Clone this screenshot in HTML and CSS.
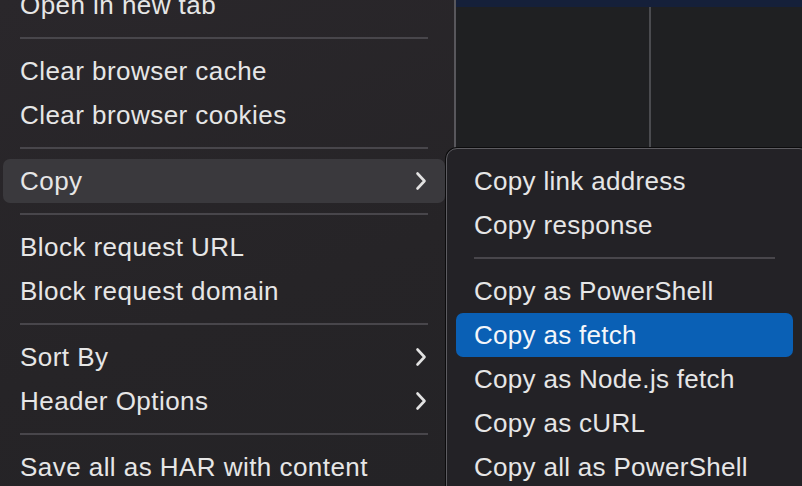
FILE: index.html
```html
<!DOCTYPE html>
<html lang="en">
<head>
  <meta charset="UTF-8">
  <title>Network context menu</title>
  <link rel="stylesheet" href="styles.css">
</head>
<body>
  <div class="screen">
    <!-- Main context menu -->
    <div class="menu">
      <div class="menu-list">
        <div class="item item-top">Open in new tab</div>
        <div class="sep"></div>
        <div class="item">Clear browser cache</div>
        <div class="item">Clear browser cookies</div>
        <div class="sep"></div>
        <div class="item item-open">Copy
          <svg class="chevron" viewBox="0 0 12 20"><polyline points="2.5,2.5 9.5,10 2.5,17.5"/></svg>
        </div>
        <div class="sep"></div>
        <div class="item">Block request URL</div>
        <div class="item">Block request domain</div>
        <div class="sep"></div>
        <div class="item">Sort By
          <svg class="chevron" viewBox="0 0 12 20"><polyline points="2.5,2.5 9.5,10 2.5,17.5"/></svg>
        </div>
        <div class="item">Header Options
          <svg class="chevron" viewBox="0 0 12 20"><polyline points="2.5,2.5 9.5,10 2.5,17.5"/></svg>
        </div>
        <div class="sep"></div>
        <div class="item">Save all as HAR with content</div>
      </div>
    </div>

    <!-- Network panel behind the menu -->
    <div class="pane">
      <div class="pane-band"></div>
      <div class="pane-cols">
        <div class="pane-col"></div>
        <div class="pane-col"></div>
      </div>
    </div>

    <!-- Copy submenu -->
    <div class="submenu">
      <div class="item">Copy link address</div>
      <div class="item">Copy response</div>
      <div class="sep"></div>
      <div class="item">Copy as PowerShell</div>
      <div class="item item-active">Copy as fetch</div>
      <div class="item">Copy as Node.js fetch</div>
      <div class="item">Copy as cURL</div>
      <div class="item">Copy all as PowerShell</div>
    </div>
  </div>
</body>
</html>
```

FILE: styles.css
```css
/* General */
body {
  margin: 0;
  background-color: #1f2022;
  font-family: "Liberation Sans", Arial, sans-serif;
  overflow: hidden;
}

.screen {
  position: relative;
  display: flex;
  width: 802px;
  height: 486px;
  overflow: hidden;
}

/* Main menu */
.menu {
  width: 456px;
  flex-shrink: 0;
  background: linear-gradient(160deg, #2a272b, #262427 60%, #242326);
  border-right: 2px solid #58575c;
  padding: 0 9px 0 3px;
  box-sizing: border-box;
}

.menu-list {
  margin-top: -17px;
}

.item {
  display: flex;
  align-items: center;
  justify-content: space-between;
  height: 44px;
  padding: 0 18px 0 17px;
  color: #e6e6e6;
  font-size: 26px;
  letter-spacing: 0.45px;
  border-radius: 7px;
  white-space: nowrap;
}

.item-open {
  background-color: #3a393d;
}

.chevron {
  width: 12px;
  height: 20px;
  fill: none;
  stroke: #e2e2e2;
  stroke-width: 2.6;
  stroke-linecap: round;
  stroke-linejoin: round;
}

.sep {
  height: 22px;
  display: flex;
  align-items: center;
  padding: 0 17px 0 17px;
}

.sep::before {
  content: "";
  flex: 1;
  height: 2px;
  background-color: #48464b;
}

/* Background panel */
.pane {
  flex: 1;
  display: flex;
  flex-direction: column;
}

.pane-band {
  height: 7px;
  background-color: #15203a;
}

.pane-cols {
  flex: 1;
  display: flex;
}

.pane-col {
  width: 193px;
  border-right: 2px solid #4a4b4f;
}

.pane-col + .pane-col {
  flex: 1;
  border-right: none;
}

/* Submenu */
.submenu {
  position: absolute;
  left: 446px;
  top: 148px;
  width: 364px;
  height: 360px;
  box-sizing: border-box;
  padding: 10px 16px 0 9px;
  background-color: #232226;
  border: 1px solid #5d5c61;
  border-radius: 11px;
  box-shadow: 0 0 0 1px #0c0c0d;
}

.submenu .item {
  padding: 0 18px;
  letter-spacing: 0.3px;
}

.submenu .sep {
  padding: 0 18px;
}

.item-active {
  background-color: #0a60b5;
  color: #f4f6fa;
}
```
